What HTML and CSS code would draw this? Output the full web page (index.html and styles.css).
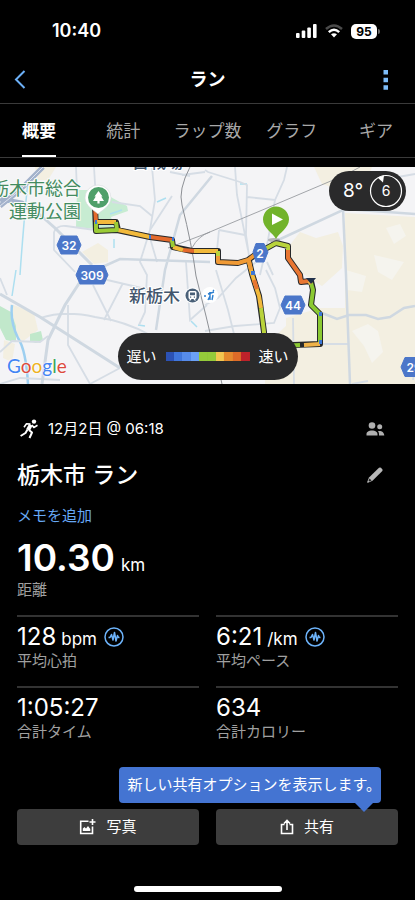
FILE: index.html
```html
<!DOCTYPE html>
<html lang="ja">
<head>
    <meta charset="UTF-8">
    <meta name="viewport" content="width=device-width, initial-scale=1.0">
    <title>ラン</title>
    <link rel="stylesheet" href="styles.css">
</head>
<body>
    <div class="status-bar">
        <span class="clock">10:40</span>
        <div class="indicators">
            <svg width="21" height="14" viewBox="0 0 21 14" fill="#fff">
                <rect x="0" y="9" width="3.600" height="5" rx="1"/>
                <rect x="5.700" y="6.500" width="3.600" height="7.500" rx="1"/>
                <rect x="11.300" y="3.500" width="3.600" height="10.500" rx="1"/>
                <rect x="17" y="0" width="3.600" height="14" rx="1"/>
            </svg>
            <svg width="18" height="14" viewBox="0 0 18 14" fill="none" stroke-width="2.500">
                <path d="M1 5 Q9 -2 17 5" stroke="#4a4a4a"/>
                <path d="M3.800 8.200 Q9 3.400 14.200 8.200" stroke="#fff"/>
                <path d="M6 10.300 Q9 8 12 10.300 L9 13.500 Z" fill="#fff"/>
            </svg>
            <span class="battery">95</span>
        </div>
    </div>

    <header class="header">
        <button class="back" aria-label="戻る">
            <svg width="12" height="20" viewBox="0 0 12 20" fill="none" stroke="#6cb0f7" stroke-width="2"><path d="M10.500 1 L2 9.500 L10.500 18"/></svg>
        </button>
        <h1>ラン</h1>
        <button class="more" aria-label="メニュー">
            <svg width="6" height="20" viewBox="0 0 6 20" fill="#7dbcf9"><path d="M.5 0h4.500v4.500H.5zM.5 7.700h4.500v4.500H.5zM.5 15.200h4.500v4.500H.5z"/></svg>
        </button>
    </header>

    <nav class="tabs">
        <a href="#" class="active">概要</a>
        <a href="#">統計</a>
        <a href="#">ラップ数</a>
        <a href="#">グラフ</a>
        <a href="#">ギア</a>
    </nav>

    <div class="map">
        <svg class="map-canvas" viewBox="0 167 415 217" preserveAspectRatio="xMidYMid slice">
            <rect x="-400" y="167" width="1200" height="217" fill="#f4f4f6"/>

            <!-- 農地 -->
            <g fill="#f3efe1">
                <path d="M345 213 L415 217 V384 H265 V346 L286 326 V318 L320 308 L345 308 Z"/>
                <path d="M314 167 H372 L366 182 L340 190 L322 184 Z"/>
                <path d="M300 232 L316 238 L338 232 L343 246 L342 268 L322 286 L300 272 L286 250 Z"/>
                <path d="M82 252 L98 243 L108 250 L108 262 L94 264 Z"/>
                <path d="M11 304 L34 313 L38 330 L22 342 L16 332 Z"/>
                <path d="M4 340 L15 344 L12 362 L3 358 Z M35 167 H56 L48 180 H38 Z"/>
            </g>
            <path d="M352 331 L368 324 L378 331 L383 352 L372 363 L364 346 Z M346 270 L366 276 L362 292 L347 290 Z M386 228 L400 224 L406 236 L394 244 Z M374 255 L404 262 L392 280 L378 272 Z" fill="#f5f4ee"/>

            <!-- 公園 -->
            <path d="M77 190 H98 L127 206 L128 211 L111 217 L116 231 L76 227 Z" fill="#c7ecd2"/>
            <path d="M0 306 L11 312 L16 326 L16 342 L6 340 L0 328 Z M30 334 L41 331 L43 340 L36 343 L30 341 Z" fill="#c1e8cb"/>

            <!-- 川 -->
            <g fill="none" stroke="#addff0" stroke-width="1.500">
                <path d="M28 180 Q23 230 20 275 M16 270 L12 296"/>
                <path d="M12 305 Q10 322 18 338 Q26 350 28 384" stroke-width="2.500" stroke="#9dcff0"/>
                <path d="M110 214 L122 210 M114 239 V248 M157 202 L166 198 M138 325 L145 326 M240 184 L247 184 M191 321 L197 327"/>
            </g>

            <!-- 道路 -->
            <g fill="none" stroke="#d6dde5" stroke-width="1.800">
                <path d="M76 167 L77 190 M94 167 L96 200 M112 202 L140 206 L152 216 M152 167 L155 200 L150 230 L140 262 L147 275 L145 312 L139 325 M190 176 L170 172 M182 175 L205 172"/>
                <path d="M54 232 V250 L75 272 M54 232 Q57 225 66 226 L95 230 M150 238 L157 262 M172 196 L150 230"/>
                <path d="M205 170 L208 172 L240 182 L247 185 L246 235 L249 256 M235 167 L237 195 L248 250 M247 197 L275 200 L284 180 L287 167 M275 200 L268 240 L260 275 M219 230 L245 235 M219 230 L217 250 M267 262 L273 275"/>
                <path d="M40 318 Q65 310 95 317 Q125 321 150 335 M68 305 V345 L90 384 L120 368 M93 285 L111 321 M123 283 L104 320 M103 279 L150 290 M0 352 L12 341 L40 342 L48 336"/>
                <path d="M216 270 L228 310 L238 350 M205 305 L218 298 L236 278 L256 262 M205 331 L235 326 L274 323 L280 308 L275 288 L266 270 M186 262 L190 320 L207 305 M293 318 L294 384 M322 344 L349 344 M352 384 L368 381"/>
                <path d="M398 177 L415 174 M0 278 L7 295 M0 384 L20 378 L60 380 M413 380 L415 365"/>
            </g>
            <g fill="none" stroke="#cfd8e1" stroke-width="3">
                <path d="M0 294 L40 317 L120 368 M80 282 L65 305 L48 340 L42 384 M38 213 L55 228 L92 265"/>
                <path d="M212 176 L180 215 L165 270 L156 330 M100 268 L120 259 L210 262" stroke-width="2.500"/>
                <path d="M276 241 L345 209 L415 214 M343 209 L346 275 L350 384" stroke-width="2.500"/>
                <path d="M322 313 L337 319 L349 315 H366 L378 319 L390 317 L404 308 L415 306" stroke-width="2.500"/>
            </g>
            <path d="M43 167 L20 190 L0 206 M0 199 L22 203 L38 214" fill="none" stroke="#a3b2cb" stroke-width="5"/>
            <path d="M43 167 L20 190 L0 206" fill="none" stroke="#dce2ee" stroke-width="1"/>

            <!-- 鉄道 -->
            <g fill="none" stroke="#8d9095" stroke-width="1">
                <path d="M190 167 Q178 190 182 205 Q192 245 196 276 L206 316 L222 384"/>
                <path d="M168 248 L205 234 L260 211 L345 175 L360 167 M192 248 Q198 236 210 232" stroke-width=".8"/>
            </g>

            <text class="place" x="132" y="168">古戦場</text>
            <g class="park-name">
                <text x="81" y="195">栃木市総合</text>
                <text x="81" y="218">運動公園</text>
            </g>
            <text class="place" x="129" y="302">新栃木</text>
            <circle cx="192.500" cy="295.500" r="8" fill="#fff"/>
            <circle cx="192.500" cy="295.500" r="7" fill="#4a6078"/>
            <path d="M190 291 h5 q1.500 0 1.500 1.500 v5 q0 1.500 -1.500 1.500 l1 1.500 h-1.500 l-1 -1.500 h-2 l-1 1.500 h-1.500 l1 -1.500 q-1.500 0 -1.500 -1.500 v-5 q0 -1.500 1.500 -1.500z" fill="#fff"/>
            <path d="M190 292.500 h5 v2.800 h-5z M190 296.500h1.200v1.200h-1.200z M193.800 296.500h1.200v1.200h-1.200z" fill="#4a6078"/>
            <circle cx="210" cy="295" r="8" fill="#fff"/>
            <path d="M204 296 h2 M208 294 L214 292 M210 292 V300 M208 300 L210 296 M213 290 L214 291 M213 295 L212 300" stroke="#2d7fd0" stroke-width="1.400" fill="none"/>

            <!-- 走行ルート -->
            <g class="route">
                <path class="outline" d="M95 206 L96 231 L117 230 L150 237 L172 240 L173 247 L192 251 H218 V262 L238 263 L248 260 L258 253 L276 243 L288 246 V258 L300 275 L301 282 L311 281 L313 290 L311 305 L320 314 V344 L293 345 L264 347 L264 332 L259 296 L252 274 L249 261 M96 222 L116 222 L118 230"/>
                <path stroke="#e46a2c" d="M95 206 L96 222 M150 237 L172 240 M183 250 L194 251"/>
                <path stroke="#f2b93b" d="M96 222 L116 222 M118 230 L150 237 M173 247 L183 250 M194 251 H218 M249 262 L252 274 L259 296 L261 308"/>
                <path stroke="#9acb35" d="M96 222 V231 L117 230 L116 222 M172 240 L173 247"/>
                <path stroke="#f09a35" d="M218 253 V262 L238 263 L248 260 L256 254 M249 261 L251 270"/>
                <path stroke="#b9d33b" d="M218 251 V256 M256 254 L276 243 L288 246 V250 M261 308 L264 332 V347"/>
                <path stroke="#e87632" d="M288 250 V258 L300 275 L301 282 L309 281 M254 280 L257 289"/>
                <path stroke="#8bc932" d="M311 283 L313 290 L311 305 L320 314 V344 M300 345 L264 347"/>
                <path stroke="#efb248" d="M320 344 L304 345 M309 281 L311 284"/>
                <path stroke="#3c78d8" d="M149 237 h2 M172 239 h2 M251 273 h4 M319 314 h3 M319 342 h3 M95 222 h2"/>
            </g>
            <path d="M306 278 L316 278 L311 284 Z" fill="#20304a"/>
            <ellipse cx="274" cy="240" rx="6" ry="2" fill="#777" opacity=".5"/>

            <!-- 国道・県道番号 -->
            <g class="shields">
                <path d="M61 236 H77 L81 245 L77 254 H61 L57 245 Z M80 265.500 H104 L108 275 L104 284 H80 L76 275 Z M285 296 H301 L305 305 L301 314 H285 L281 305 Z M405 357.500 H420 V376.500 H405 L401 367 Z"/>
                <path d="M256 243.500 H264 L268 252 L264 262 H256 L253 252 Z"/>
                <text x="69" y="250">32</text>
                <text x="92" y="280">309</text>
                <text x="260" y="258">2</text>
                <text x="293" y="310">44</text>
                <text x="414" y="372">29</text>
            </g>

            <path d="M98 214 C95 211 85 206 85 198 A13 13 0 0 1 111 198 C111 206 101 211 98 214 Z" fill="#fff" stroke="#d5d9dc" stroke-width=".6"/>
            <circle cx="98.500" cy="197.500" r="10.500" fill="#4fa06a"/>
            <path d="M98.500 191 L102.500 196.500 H101.200 L104 201 H99.600 V203.500 H97.400 V201 H93 L95.800 196.500 H94.500 Z" fill="#fff"/>
            <path d="M276 239 C273 233 263 228 263 219.500 A13 13 0 0 1 289 219.500 C289 228 279 233 276 239 Z" fill="#72b32b"/>
            <path d="M272 213.500 L283 219.500 L272 225 Z" fill="#fff"/>
        </svg>

        <div class="google">
            <span class="blue">G</span><span class="red">o</span><span class="yellow">o</span><span class="blue">g</span><span class="green">l</span><span class="red">e</span>
        </div>

        <div class="weather">
            <span>8°</span>
            <div class="wind">
                <svg width="34" height="34" viewBox="0 0 34 34"><circle cx="17" cy="17" r="15.500" fill="none" stroke="#fff" stroke-width="1.200"/><path d="M8.500 3.500 L15 1.500 L14 8.500 Z" fill="#fff"/></svg>
                <span>6</span>
            </div>
        </div>

        <div class="legend">
            <span>遅い</span>
            <div class="scale">
                <i class="s1"></i><i class="s2"></i><i class="s3"></i><i class="s4"></i><i class="s5"></i><i class="s5"></i><i class="s6"></i><i class="s7"></i><i class="s8"></i><i class="s9"></i>
            </div>
            <span>速い</span>
        </div>
    </div>

    <main class="details">
        <div class="row date-row">
            <svg width="19" height="20" viewBox="0 0 19 20" fill="none" stroke="#fff" stroke-linejoin="round">
                <circle cx="14" cy="2.600" r="2.200" fill="#fff" stroke="none"/>
                <path d="M4 8.200 L6.500 4.800 L10.500 5" stroke-width="1.600"/>
                <path d="M10.800 5.800 L8 11" stroke-width="4"/>
                <path d="M12 6 L13.800 8.500 L17.500 6.300" stroke-width="1.600"/>
                <path d="M7.500 10.500 L5.500 14 L.6 17" stroke-width="2"/>
                <path d="M9 11 L12 13.500 L9.500 19" stroke-width="2"/>
            </svg>
            <span class="date">12月2日 @ 06:18</span>
            <button class="icon-button" aria-label="公開範囲">
                <svg width="19" height="14" viewBox="0 0 19 14" fill="#b0b0b0">
                    <circle cx="6" cy="3.500" r="3.300"/><circle cx="13.700" cy="4.800" r="2.500"/>
                    <path d="M.5 13.500 V12 C.5 10 3 8.500 6 8.500 S11.500 10 11.500 12 V13.500 Z M13 13.500 V12 C13 11 12.700 10 12 9 C15 8.500 18 9.500 18.300 13.500 Z"/>
                </svg>
            </button>
        </div>
        <div class="row title-row">
            <h2>栃木市 ラン</h2>
            <button class="icon-button" aria-label="編集">
                <svg width="18" height="16" viewBox="0 0 18 16" fill="#b8b8b8"><path d="M12 .8 Q13 0 14 .8 L15.300 2.200 Q16 3 15.300 4 L5.500 13.800 L1 15.700 Q0 16 .2 15 L2 10.500 Z"/><path d="M2.500 11.500 L4.600 13.500 L2.300 14.500 L1.500 13.700 Z" fill="#222"/></svg>
            </button>
        </div>
        <a href="#" class="memo">メモを追加</a>

        <div class="distance">
            <div class="distance-value">10.30 <small>km</small></div>
            <div class="label">距離</div>
        </div>

        <div class="stats">
            <div class="stat">
                <div class="value">128 <small>bpm</small>
                    <svg class="pulse" width="20" height="20" viewBox="0 0 20 20"><circle cx="10" cy="10" r="9"/><path d="M4.500 10.500 H6 L7.500 7.500 L9 13 L10.500 5.500 L12 14 L13.500 8.500 L14.500 10.500 H15.500"/></svg>
                </div>
                <div class="label">平均心拍</div>
            </div>
            <div class="stat">
                <div class="value">6:21 <small>/km</small>
                    <svg class="pulse" width="20" height="20" viewBox="0 0 20 20"><circle cx="10" cy="10" r="9"/><path d="M4.500 10.500 H6 L7.500 7.500 L9 13 L10.500 5.500 L12 14 L13.500 8.500 L14.500 10.500 H15.500"/></svg>
                </div>
                <div class="label">平均ペース</div>
            </div>
            <div class="stat">
                <div class="value">1:05:27</div>
                <div class="label">合計タイム</div>
            </div>
            <div class="stat">
                <div class="value">634</div>
                <div class="label">合計カロリー</div>
            </div>
        </div>
    </main>

    <footer class="footer">
        <div class="actions">
            <button class="action">
                <svg width="17" height="16" viewBox="0 0 17 16" fill="none" stroke="#fff" stroke-width="1.600"><path d="M9.500 2.200 H1.700 V14.500 H13.500 V7.500 M13.500 0 V6 M10.500 3 H16.500"/><path d="M3.800 12 V9.500 L5.500 8 L7 9.500 L9 7 L11.300 10 V12 Z" fill="#fff" stroke="none"/></svg>
                写真
            </button>
            <div class="share">
                <button class="action">
                    <svg width="14" height="16" viewBox="0 0 14 16" fill="none" stroke="#fff" stroke-width="1.600"><path d="M4.500 5.500 H1.500 V14.500 H12.500 V5.500 H9.500 M7 11 V1.500 M4 4.500 L7 1.300 L10 4.500"/></svg>
                    共有
                </button>
                <div class="tooltip">新しい共有オプションを表示します。</div>
            </div>
        </div>
        <div class="home-indicator"></div>
    </footer>
</body>
</html>
```

FILE: styles.css
```css
* {
    box-sizing: border-box;
}
body {
    font-family: Inter, "Noto Sans CJK JP", sans-serif;
    background: #000;
    color: #fff;
    margin: 0;
    min-height: 100vh;
    display: flex;
    flex-direction: column;
    overflow-x: hidden;
    font-size: 15px;
    line-height: 20px;
}
button {
    font: inherit;
    color: inherit;
    background: none;
    border: none;
    padding: 0;
    cursor: pointer;
}
a {
    text-decoration: none;
}
svg {
    display: block;
}

/* ステータスバー */
.status-bar {
    display: flex;
    justify-content: space-between;
    align-items: center;
    height: 56px;
    padding: 6px 35px 0 52px;
}
.clock {
    font-size: 18px;
    font-weight: 600;
}
.indicators {
    display: flex;
    align-items: center;
    gap: 8px;
}
.battery {
    position: relative;
    width: 26px;
    height: 15px;
    margin-right: 3px;
    border-radius: 5px;
    background: #fff;
    color: #000;
    font-size: 12px;
    font-weight: 700;
    line-height: 15px;
    text-align: center;
}
.battery::after {
    content: "";
    position: absolute;
    right: -3px;
    top: 5px;
    width: 2px;
    height: 5px;
    border-radius: 0 2px 2px 0;
    background: #666;
}

/* ヘッダー */
.header {
    display: flex;
    align-items: center;
    height: 48px;
    padding: 0 20px 0 14px;
    border-bottom: 1px solid #3a3a3a;
}
.header h1 {
    flex: 1;
    margin: 0;
    font-size: 18px;
    font-weight: 700;
    text-align: center;
}
.back {
    width: 24px;
}
.more {
    display: flex;
    justify-content: center;
    width: 18px;
}
.tabs {
    display: flex;
    height: 54px;
    margin: 0 -3px 9px;
    border-bottom: 1px solid #3a3a3a;
}
.tabs a {
    flex: 1;
    display: flex;
    justify-content: center;
    color: #a8a8a8;
    font-size: 17px;
    line-height: 54px;
    white-space: nowrap;
}
.tabs .active {
    color: #fff;
    font-weight: 700;
}
.tabs .active::before {
    content: "";
    align-self: flex-end;
    width: 34px;
    height: 2px;
    margin-right: -34px;
    background: #fff;
}

/* 地図 */
.map {
    position: relative;
    height: 217px;
    overflow: hidden;
}
.map-canvas {
    width: 100%;
    height: 100%;
}
.place {
    font-size: 17px;
    font-weight: 500;
    fill: #43566d;
    stroke: #fff;
    stroke-width: 2px;
    paint-order: stroke;
}
.park-name {
    font-size: 18px;
    fill: #438b60;
    text-anchor: end;
    stroke: #f7faf8;
    stroke-width: 2px;
    paint-order: stroke;
}
.route path {
    fill: none;
    stroke-width: 4px;
    stroke-linejoin: round;
}
.route .outline {
    stroke: #26282a;
    stroke-width: 6px;
}
.shields path {
    fill: #4b76c9;
    stroke: #4b76c9;
    stroke-linejoin: round;
}
.shields text {
    fill: #fff;
    font-size: 12px;
    font-weight: 600;
    text-anchor: middle;
}
.google {
    position: absolute;
    left: 7px;
    bottom: 8px;
    font-family: Lato, sans-serif;
    font-size: 19px;
    text-shadow: 0 0 2px #fff, 0 0 2px #fff;
}
.google .blue {
    color: #4285f4;
}
.google .red {
    color: #dc4a3d;
}
.google .yellow {
    color: #eeb223;
}
.google .green {
    color: #3ca757;
}
.weather {
    position: absolute;
    top: 4px;
    right: 9px;
    display: flex;
    align-items: center;
    justify-content: space-between;
    width: 77px;
    height: 40px;
    padding: 0 3px 0 14px;
    border-radius: 20px;
    background: #2a2a2b;
    font-size: 19px;
}
.wind {
    display: grid;
    place-items: center;
    font-size: 14px;
}
.wind > * {
    grid-area: 1 / 1;
}
.legend {
    position: absolute;
    left: 50%;
    bottom: 4px;
    transform: translateX(-50%);
    display: flex;
    align-items: center;
    gap: 9px;
    height: 47px;
    padding: 0 9px;
    border-radius: 24px;
    background: #2a2a2b;
    font-size: 15px;
    white-space: nowrap;
}
.scale {
    display: flex;
    width: 84px;
    height: 9px;
}
.scale i {
    flex: 1;
}
.s1 { background: #2c52b5; }
.s2 { background: #4076dc; }
.s3 { background: #568bea; }
.s4 { background: #6ba1f6; }
.s5 { background: #94ca3a; }
.s6 { background: #f3c650; }
.s7 { background: #e58a2e; }
.s8 { background: #dd6b28; }
.s9 { background: #bd222a; }

/* 詳細 */
.details {
    padding: 30px 17px 0;
}
.row {
    display: flex;
    align-items: center;
}
.row .icon-button {
    margin-left: auto;
    margin-right: 13px;
}
.date-row {
    height: 30px;
    gap: 9px;
    padding-left: 3px;
}
.title-row {
    height: 32px;
    margin: 15px 0;
}
h2 {
    margin: 0;
    font-size: 23px;
    font-weight: 500;
    line-height: 32px;
}
.memo {
    display: block;
    color: #67a9f5;
}
.distance {
    margin: 12px 0 15px;
}
.distance-value {
    display: flex;
    align-items: baseline;
    gap: 6px;
    height: 40px;
    margin-bottom: 2px;
    font-size: 37px;
    font-weight: 600;
    line-height: 40px;
}
small {
    font-size: 17px;
    font-weight: 400;
    line-height: 1;
}
.label {
    color: #a0a0a0;
}
.stats {
    display: grid;
    grid-template-columns: 1fr 1fr;
    gap: 15px 17px;
}
.stat {
    border-top: 2px solid #333;
    padding-top: 6px;
}
.value {
    display: flex;
    align-items: baseline;
    gap: 5px;
    height: 28px;
    font-size: 24px;
    line-height: 28px;
}
.pulse {
    align-self: center;
    margin-left: 2px;
    fill: none;
    stroke: #6db3fa;
    stroke-width: 1.5px;
    stroke-linejoin: round;
}

/* 下部ボタン */
.footer {
    margin-top: auto;
    padding: 24px 17px 8px;
}
.actions {
    display: grid;
    grid-template-columns: 1fr 1fr;
    gap: 17px;
}
.action {
    display: flex;
    align-items: center;
    justify-content: center;
    gap: 10px;
    width: 100%;
    height: 36px;
    border-radius: 4px;
    background: #3d3d3d;
}
.share {
    position: relative;
}
.tooltip {
    position: absolute;
    right: 17px;
    bottom: 42px;
    padding: 8px 0 8px 8px;
    border-radius: 4px;
    background: #4474d2;
    white-space: nowrap;
}
.tooltip::after {
    content: "";
    position: absolute;
    right: 8px;
    top: 100%;
    border: 9px solid transparent;
    border-top-color: #4474d2;
    border-bottom: none;
}
.home-indicator {
    width: 148px;
    height: 6px;
    margin: 41px auto 0;
    border-radius: 3px;
    background: #fff;
}
```
